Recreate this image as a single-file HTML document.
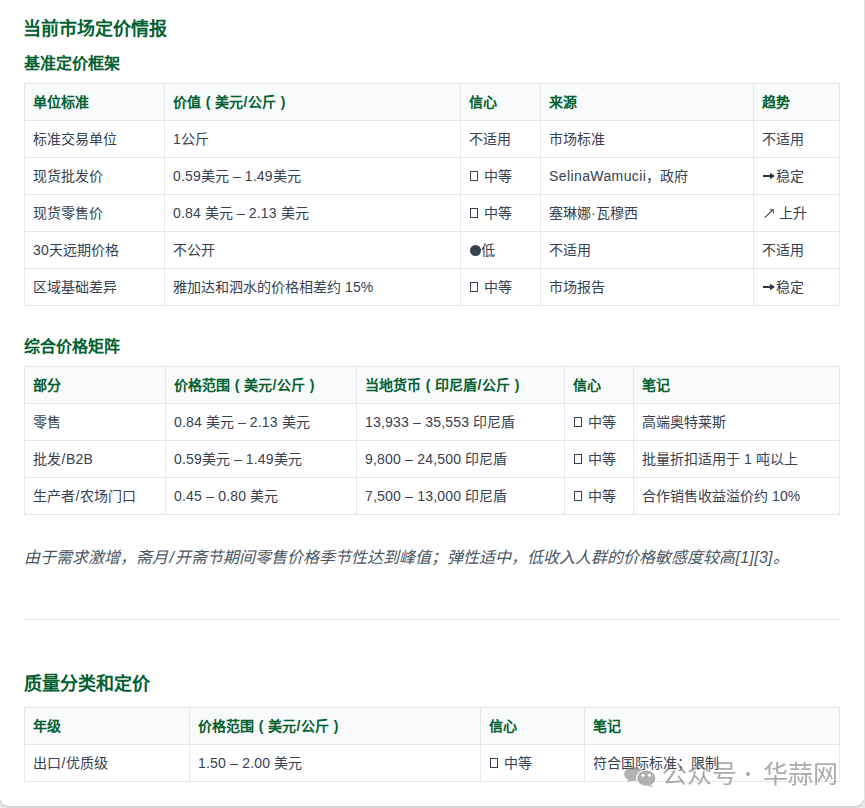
<!DOCTYPE html>
<html lang="zh-CN"><head><meta charset="utf-8">
<style>
html,body{margin:0;padding:0}
body{width:865px;height:808px;overflow:hidden;background:#e8e9eb;position:relative;font-family:"Liberation Sans",sans-serif;color:#374151}
.card{position:absolute;left:0;top:-40px;width:864px;height:846px;background:#fff;border-radius:0 0 9px 9px;box-shadow:0 2px 3px rgba(0,0,0,.1)}
.h{position:absolute;left:24px;margin:0;color:#03602f;font-weight:bold;white-space:nowrap}
.h1{font-size:18px;line-height:24px}
.h3{font-size:16px;line-height:22px}
table{position:absolute;left:24px;border-collapse:collapse;table-layout:fixed;font-size:14px}
td,th{border:1px solid #e5e7eb;padding:0 8px;height:36px;text-align:left;white-space:nowrap;line-height:20px;vertical-align:middle}
th{background:#f9fafb;color:#03602f;font-weight:bold}
.note{position:absolute;left:24px;top:547px;font-size:16px;line-height:22px;font-style:italic;color:#4b5563;white-space:nowrap}
.hr{position:absolute;left:24px;top:619px;width:816px;height:1px;background:#e5e7eb}
.box{display:inline-block;width:6px;height:8px;border:1px solid #374151;vertical-align:0;margin:0 6px 0 1px}
.wm{position:absolute;left:664px;top:757px;color:rgba(120,120,120,.62);font-size:25px;line-height:34px;white-space:nowrap;will-change:transform}
.wx{position:absolute;left:623px;top:764px;width:36px;height:26px}
.pl,.pr{display:inline-block;width:14px;text-align:center}
.ar{display:inline-block;vertical-align:1px;margin-left:1px;margin-right:1px}
.ne{display:inline-block;vertical-align:0;margin-left:2px;margin-right:1px}
.sl{margin:0 .6px}
.note .sl{margin:0 1.5px}
.ref{letter-spacing:.3px}
.lt{letter-spacing:.2px}
.dot{display:inline-block;width:11px;height:11px;border-radius:50%;background:#374151;vertical-align:-1px;margin-left:1px}
</style></head><body>
<div class="card"></div>
<div class="h h1" style="top:17px;left:23px">当前市场定价情报</div>
<div class="h h3" style="top:53px">基准定价框架</div>
<table style="top:83px;width:815px">
<colgroup><col style="width:140px"><col style="width:296px"><col style="width:80px"><col style="width:213px"><col style="width:86px"></colgroup>
<tr><th>单位标准</th><th>价值<span class="pl">(</span>美元<span class="sl">/</span>公斤<span class="pr">)</span></th><th>信心</th><th>来源</th><th>趋势</th></tr>
<tr><td>标准交易单位</td><td><span class="lt">1</span>公斤</td><td>不适用</td><td>市场标准</td><td>不适用</td></tr>
<tr><td>现货批发价</td><td><span class="lt">0.59</span>美元 – <span class="lt">1.49</span>美元</td><td><span class="box"></span>中等</td><td><span class="lt" style="letter-spacing:.4px">SelinaWamucii</span>，政府</td><td><svg class="ar" width="12" height="8" viewBox="0 0 12 8"><path d="M0 3.1H8V4.9H0Z M7 0.8L12 4L7 7.2Z" fill="#2b3443"/></svg>稳定</td></tr>
<tr><td>现货零售价</td><td><span class="lt">0.84 </span>美元 – <span class="lt">2.13 </span>美元</td><td><span class="box"></span>中等</td><td>塞琳娜·瓦穆西</td><td><svg class="ne" width="10" height="9" viewBox="0 0 10 9"><path d="M0.8 8.6L8.6 0.9" stroke="#374151" stroke-width="1.1" fill="none"/><path d="M5.8 0.7H9.3V4.2" stroke="#374151" stroke-width="1.1" fill="none"/></svg> 上升</td></tr>
<tr><td><span class="lt">30</span>天远期价格</td><td>不公开</td><td><span class="dot"></span>低</td><td>不适用</td><td>不适用</td></tr>
<tr><td>区域基础差异</td><td>雅加达和泗水的价格相差约 <span class="lt">15%</span></td><td><span class="box"></span>中等</td><td>市场报告</td><td><svg class="ar" width="12" height="8" viewBox="0 0 12 8"><path d="M0 3.1H8V4.9H0Z M7 0.8L12 4L7 7.2Z" fill="#2b3443"/></svg>稳定</td></tr>
</table>
<div class="h h3" style="top:336px">综合价格矩阵</div>
<table style="top:366px;width:815px">
<colgroup><col style="width:141px"><col style="width:191px"><col style="width:208px"><col style="width:69px"><col style="width:206px"></colgroup>
<tr><th>部分</th><th>价格范围<span class="pl">(</span>美元<span class="sl">/</span>公斤<span class="pr">)</span></th><th>当地货币<span class="pl">(</span>印尼盾<span class="sl">/</span>公斤<span class="pr">)</span></th><th>信心</th><th>笔记</th></tr>
<tr><td>零售</td><td><span class="lt">0.84 </span>美元 – <span class="lt">2.13 </span>美元</td><td><span class="lt">13,933 – 35,553 </span>印尼盾</td><td><span class="box"></span>中等</td><td>高端奥特莱斯</td></tr>
<tr><td>批发<span class="sl">/</span><span class="lt">B2B</span></td><td><span class="lt">0.59</span>美元 – <span class="lt">1.49</span>美元</td><td><span class="lt">9,800 – 24,500 </span>印尼盾</td><td><span class="box"></span>中等</td><td>批量折扣适用于 <span class="lt">1 </span>吨以上</td></tr>
<tr><td>生产者<span class="sl">/</span>农场门口</td><td><span class="lt">0.45 – 0.80 </span>美元</td><td><span class="lt">7,500 – 13,000 </span>印尼盾</td><td><span class="box"></span>中等</td><td>合作销售收益溢价约 <span class="lt">10%</span></td></tr>
</table>
<div class="note">由于需求激增，斋月<span class="sl">/</span>开斋节期间零售价格季节性达到峰值；弹性适中，低收入人群的价格敏感度较高<span class="ref">[1][3]</span>。</div>
<div class="hr"></div>
<div class="h h1" style="top:672px">质量分类和定价</div>
<table style="top:707px;width:815px">
<colgroup><col style="width:165px"><col style="width:291px"><col style="width:104px"><col style="width:255px"></colgroup>
<tr><th>年级</th><th>价格范围<span class="pl">(</span>美元<span class="sl">/</span>公斤<span class="pr">)</span></th><th>信心</th><th>笔记</th></tr>
<tr><td>出口<span class="sl">/</span>优质级</td><td><span class="lt">1.50 – 2.00 </span>美元</td><td><span class="box"></span>中等</td><td>符合国际标准；限制</td></tr>
</table>
<svg class="wx" viewBox="0 0 36 26"><g opacity=".6"><ellipse cx="11" cy="10" rx="10" ry="7" fill="#808080"/><path d="M5 15 L4.5 18 L10 16 Z" fill="#808080"/><ellipse cx="23.3" cy="14.2" rx="9.8" ry="8.2" fill="#808080" stroke="#fff" stroke-width="1.2"/><path d="M27 20 L30 23.5 L25 21.5 Z" fill="#808080"/><circle cx="20" cy="11.3" r="1.5" fill="#fff"/><circle cx="26.4" cy="11.3" r="1.5" fill="#fff"/></g></svg>
<div class="wm" style="left:662px">公众号</div><div style="position:absolute;left:746px;top:772px;width:4px;height:4px;border-radius:50%;background:rgba(120,120,120,.62)"></div><div class="wm" style="left:763px">华蒜网</div>
</body></html>
